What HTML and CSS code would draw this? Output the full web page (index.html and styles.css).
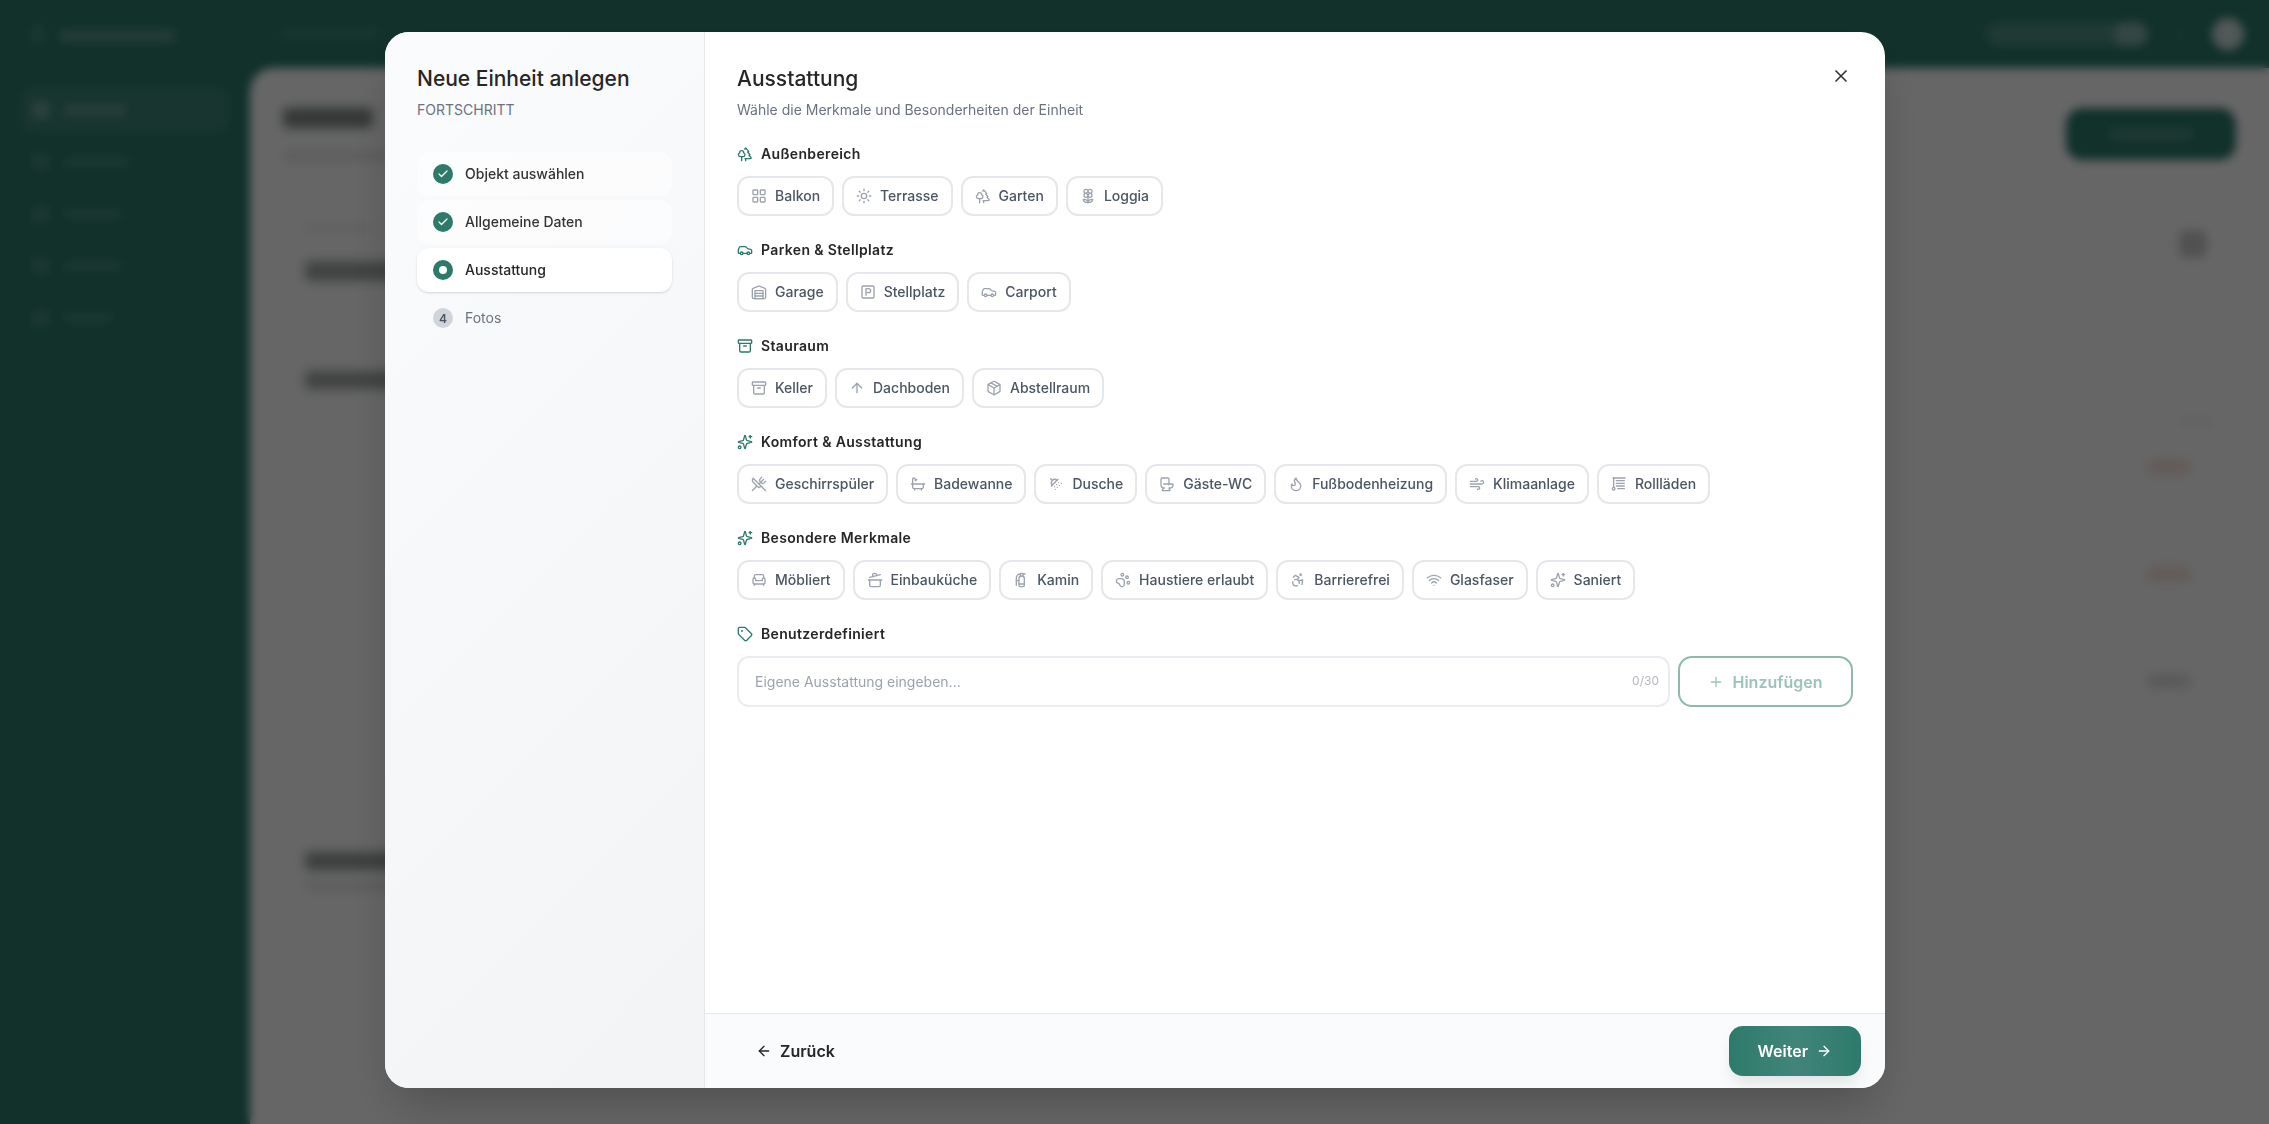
FILE: index.html
```html
<!DOCTYPE html>
<html lang="de">
<head>
<meta charset="utf-8">
<title>Neue Einheit anlegen</title>
<link rel="stylesheet" href="styles.css">
</head>
<body>
<svg class="defs" aria-hidden="true">
  <symbol id="i-trees" viewBox="0 0 24 24"><path d="M10 10v.2A3 3 0 0 1 8.9 16H5a3 3 0 0 1-1-5.8V10a3 3 0 0 1 6 0Z"/><path d="M7 16v6"/><path d="M13 19v3"/><path d="M12 19h8.3a1 1 0 0 0 .7-1.7L18 14h.3a1 1 0 0 0 .7-1.7L16 9h.2a1 1 0 0 0 .8-1.7L13 3l-1.4 1.5"/></symbol>
  <symbol id="i-grid" viewBox="0 0 24 24"><rect width="7" height="7" x="3" y="3" rx="1"/><rect width="7" height="7" x="14" y="3" rx="1"/><rect width="7" height="7" x="14" y="14" rx="1"/><rect width="7" height="7" x="3" y="14" rx="1"/></symbol>
  <symbol id="i-sun" viewBox="0 0 24 24"><circle cx="12" cy="12" r="4"/><path d="M12 2v2"/><path d="M12 20v2"/><path d="m4.93 4.93 1.41 1.41"/><path d="m17.66 17.66 1.41 1.41"/><path d="M2 12h2"/><path d="M20 12h2"/><path d="m6.34 17.66-1.41 1.41"/><path d="m19.07 4.93-1.41 1.41"/></symbol>
  <symbol id="i-flower" viewBox="0 0 24 24"><path d="M12 5a3 3 0 1 1 3 3m-3-3a3 3 0 1 0-3 3m3-3v1M9 8a3 3 0 1 0 3 3M9 8h1m5 0a3 3 0 1 1-3 3m3-3h-1m-2 3v-1"/><circle cx="12" cy="8" r="2"/><path d="M12 10v12"/><path d="M12 22c4.2 0 7-1.667 7-5-4.2 0-7 1.667-7 5Z"/><path d="M12 22c-4.2 0-7-1.667-7-5 4.2 0 7 1.667 7 5Z"/></symbol>
  <symbol id="i-car" viewBox="0 0 24 24"><path d="M19 17h2c.6 0 1-.4 1-1v-3c0-.9-.7-1.7-1.5-1.9C18.7 10.6 16 10 16 10s-1.3-1.4-2.2-2.3c-.5-.4-1.1-.7-1.8-.7H5c-.6 0-1.1.4-1.4.9l-1.4 2.9A3.7 3.7 0 0 0 2 12v4c0 .6.4 1 1 1h2"/><circle cx="7" cy="17" r="2"/><path d="M9 17h6"/><circle cx="17" cy="17" r="2"/></symbol>
  <symbol id="i-warehouse" viewBox="0 0 24 24"><path d="M22 8.35V20a2 2 0 0 1-2 2H4a2 2 0 0 1-2-2V8.35A2 2 0 0 1 3.26 6.5l8-3.2a2 2 0 0 1 1.48 0l8 3.2A2 2 0 0 1 22 8.35Z"/><path d="M6 18h12"/><path d="M6 14h12"/><rect width="12" height="12" x="6" y="10"/></symbol>
  <symbol id="i-parking" viewBox="0 0 24 24"><rect width="18" height="18" x="3" y="3" rx="2"/><path d="M9 17V7h4a3 3 0 0 1 0 6H9"/></symbol>
  <symbol id="i-archive" viewBox="0 0 24 24"><rect width="20" height="5" x="2" y="3" rx="1"/><path d="M4 8v11a2 2 0 0 0 2 2h12a2 2 0 0 0 2-2V8"/><path d="M10 12h4"/></symbol>
  <symbol id="i-up" viewBox="0 0 24 24"><path d="m5 12 7-7 7 7"/><path d="M12 19V5"/></symbol>
  <symbol id="i-package" viewBox="0 0 24 24"><path d="m7.5 4.27 9 5.15"/><path d="M21 8a2 2 0 0 0-1-1.73l-7-4a2 2 0 0 0-2 0l-7 4A2 2 0 0 0 3 8v8a2 2 0 0 0 1 1.73l7 4a2 2 0 0 0 2 0l7-4A2 2 0 0 0 21 16Z"/><path d="m3.3 7 8.7 5 8.7-5"/><path d="M12 22V12"/></symbol>
  <symbol id="i-sparkles" viewBox="0 0 24 24"><path d="M9.937 15.5A2 2 0 0 0 8.5 14.063l-6.135-1.582a.5.5 0 0 1 0-.962L8.5 9.936A2 2 0 0 0 9.937 8.5l1.582-6.135a.5.5 0 0 1 .963 0L14.063 8.5A2 2 0 0 0 15.5 9.937l6.135 1.581a.5.5 0 0 1 0 .964L15.5 14.063a2 2 0 0 0-1.437 1.437l-1.582 6.135a.5.5 0 0 1-.963 0z"/><path d="M20 2v4"/><path d="M22 4h-4"/><circle cx="4" cy="20" r="2"/></symbol>
  <symbol id="i-utensils" viewBox="0 0 24 24"><path d="m16 2-2.3 2.3a3 3 0 0 0 0 4.2l1.8 1.8a3 3 0 0 0 4.2 0L22 8"/><path d="M15 15 3.3 3.3a4.2 4.2 0 0 0 0 6l7.3 7.3c.7.7 2 .7 2.8 0L15 15Zm0 0 7 7"/><path d="m2.1 21.8 6.4-6.3"/><path d="m19 5-7 7"/></symbol>
  <symbol id="i-bath" viewBox="0 0 24 24"><path d="M9 6 6.5 3.5a1.5 1.5 0 0 0-1-.5C4.683 3 4 3.683 4 4.5V17a2 2 0 0 0 2 2h12a2 2 0 0 0 2-2v-5"/><path d="M10 5 8 7"/><path d="M2 12h20"/><path d="M7 19v2"/><path d="M17 19v2"/></symbol>
  <symbol id="i-shower" viewBox="0 0 24 24"><path d="m4 4 2.5 2.5"/><path d="M13.5 6.5a4.95 4.95 0 0 0-7 7"/><path d="M15 5 5 15"/><path d="M14 17v.01"/><path d="M10 16v.01"/><path d="M13 13v.01"/><path d="M16 10v.01"/><path d="M11 20v.01"/><path d="M17 14v.01"/><path d="M20 11v.01"/></symbol>
  <symbol id="i-toilet" viewBox="0 0 24 24"><path d="M7 12h13a1 1 0 0 1 1 1 5 5 0 0 1-5 5h-.598a.5.5 0 0 0-.424.765l1.544 2.47a.5.5 0 0 1-.424.765H5.402a.5.5 0 0 1-.424-.765L7 18"/><path d="M8 18a5 5 0 0 1-5-5V5a2 2 0 0 1 2-2h8a2 2 0 0 1 2 2v8"/></symbol>
  <symbol id="i-flame" viewBox="0 0 24 24"><path d="M8.5 14.5A2.5 2.5 0 0 0 11 12c0-1.38-.5-2-1-3-1.072-2.143-.224-4.054 2-6 .5 2.5 2 4.9 4 6.5 2 1.6 3 3.5 3 5.5a7 7 0 1 1-14 0c0-1.153.433-2.294 1-3a2.5 2.5 0 0 0 2.5 2.5z"/></symbol>
  <symbol id="i-wind" viewBox="0 0 24 24"><path d="M17.7 7.7a2.5 2.5 0 1 1 1.8 4.3H2"/><path d="M9.6 4.6A2 2 0 1 1 11 8H2"/><path d="M12.6 19.4A2 2 0 1 0 14 16H2"/></symbol>
  <symbol id="i-blinds" viewBox="0 0 24 24"><path d="M3 3h18"/><path d="M20 7H8"/><path d="M20 11H8"/><path d="M10 19h10"/><path d="M8 15h12"/><path d="M4 3v14"/><circle cx="4" cy="19" r="2"/></symbol>
  <symbol id="i-armchair" viewBox="0 0 24 24"><path d="M19 9V6a2 2 0 0 0-2-2H7a2 2 0 0 0-2 2v3"/><path d="M3 16a2 2 0 0 0 2 2h14a2 2 0 0 0 2-2v-5a2 2 0 0 0-4 0v2H7v-2a2 2 0 0 0-4 0Z"/><path d="M5 18v2"/><path d="M19 18v2"/></symbol>
  <symbol id="i-pot" viewBox="0 0 24 24"><path d="M2 12h20"/><path d="M20 12v8a2 2 0 0 1-2 2H6a2 2 0 0 1-2-2v-8"/><path d="m4 8 16-4"/><path d="m8.86 6.78-.45-1.81a2 2 0 0 1 1.45-2.43l1.94-.48a2 2 0 0 1 2.43 1.46l.45 1.8"/></symbol>
  <symbol id="i-extinguisher" viewBox="0 0 24 24"><path d="M15 6.5V3a1 1 0 0 0-1-1h-2a1 1 0 0 0-1 1v3.5"/><path d="M9 18h8"/><path d="M18 3h-3"/><path d="M11 3a6 6 0 0 0-6 6v11"/><path d="M5 13h4"/><path d="M17 10a4 4 0 0 0-8 0v10a2 2 0 0 0 2 2h4a2 2 0 0 0 2-2Z"/></symbol>
  <symbol id="i-paw" viewBox="0 0 24 24"><circle cx="11" cy="4" r="2"/><circle cx="18" cy="8" r="2"/><circle cx="20" cy="16" r="2"/><path d="M9 10a5 5 0 0 1 5 5v3.5a3.5 3.5 0 0 1-6.84 1.045Q6.52 17.48 4.46 16.84A3.5 3.5 0 0 1 5.5 10Z"/></symbol>
  <symbol id="i-access" viewBox="0 0 24 24"><circle cx="16" cy="4" r="1"/><path d="m18 19 1-7-6 1"/><path d="m5 8 3-3 5.5 3-2.36 3.5"/><path d="M4.24 14.5a5 5 0 0 0 6.88 6"/><path d="M13.76 17.5a5 5 0 0 0-6.88-6"/></symbol>
  <symbol id="i-wifi" viewBox="0 0 24 24"><path d="M12 20h.01"/><path d="M2 8.82a15 15 0 0 1 20 0"/><path d="M5 12.859a10 10 0 0 1 14 0"/><path d="M8.5 16.429a5 5 0 0 1 7 0"/></symbol>
  <symbol id="i-tag" viewBox="0 0 24 24"><path d="M12.586 2.586A2 2 0 0 0 11.172 2H4a2 2 0 0 0-2 2v7.172a2 2 0 0 0 .586 1.414l8.704 8.704a2.426 2.426 0 0 0 3.42 0l6.58-6.58a2.426 2.426 0 0 0 0-3.42z"/><circle cx="7.5" cy="7.5" r=".5"/></symbol>
  <symbol id="i-plus" viewBox="0 0 24 24"><path d="M5 12h14"/><path d="M12 5v14"/></symbol>
  <symbol id="i-x" viewBox="0 0 24 24"><path d="M18 6 6 18"/><path d="m6 6 12 12"/></symbol>
  <symbol id="i-left" viewBox="0 0 24 24"><path d="m12 19-7-7 7-7"/><path d="M19 12H5"/></symbol>
  <symbol id="i-right" viewBox="0 0 24 24"><path d="M5 12h14"/><path d="m12 5 7 7-7 7"/></symbol>
  <symbol id="i-check" viewBox="0 0 24 24"><path d="M20 6 9 17l-5-5"/></symbol>
</svg>

<div class="app" aria-hidden="true">
  <header class="topbar">
    <span class="logo-mark"></span><span class="logo"></span>
    <span class="search"></span>
    <span class="top-right"><span class="pill"><span class="pill-end"></span></span><span class="dot"></span><span class="avatar"></span></span>
  </header>
  <div class="shell">
    <nav class="nav">
      <span class="nav-item nav-active"><span class="nav-ic"></span><span class="nav-lb w1"></span></span>
      <span class="nav-item"><span class="nav-ic"></span><span class="nav-lb w2"></span></span>
      <span class="nav-item"><span class="nav-ic"></span><span class="nav-lb w3"></span></span>
      <span class="nav-item"><span class="nav-ic"></span><span class="nav-lb w3"></span></span>
      <span class="nav-item"><span class="nav-ic"></span><span class="nav-lb w4"></span></span>
    </nav>
    <main class="dash">
      <div class="dash-head">
        <div class="dash-titles"><span class="bar h-title"></span><span class="bar h-sub"></span></div>
        <span class="dash-btn"><span class="dash-btn-lb"></span></span>
      </div>
      <section class="card card-stat">
        <div class="stat-col"><span class="bar stat-lb"></span><span class="bar stat-num"></span></div>
        <span class="stat-ic"></span>
      </section>
      <section class="card card-list">
        <span class="bar list-title"></span>
        <span class="bar list-side"></span>
        <span class="badge badge-red"></span>
        <span class="badge badge-red"></span>
        <span class="badge badge-gray"></span>
      </section>
      <section class="card card-last">
        <span class="bar last-title"></span>
        <span class="bar last-sub"></span>
      </section>
    </main>
  </div>
</div>

<div class="overlay">
  <div class="modal">
    <aside class="side">
      <h2 class="side-title">Neue Einheit anlegen</h2>
      <p class="side-sub">FORTSCHRITT</p>
      <ol class="steps">
        <li class="step step-done"><span class="num"><svg class="ic-check"><use href="#i-check"/></svg></span>Objekt auswählen</li>
        <li class="step step-done"><span class="num"><svg class="ic-check"><use href="#i-check"/></svg></span>Allgemeine Daten</li>
        <li class="step step-now"><span class="num"><span class="num-dot"></span></span>Ausstattung</li>
        <li class="step step-todo"><span class="num">4</span>Fotos</li>
      </ol>
    </aside>
    <div class="pane">
      <button class="close" type="button" aria-label="Schließen"><svg class="ic-close"><use href="#i-x"/></svg></button>
      <div class="pane-body">
        <h2 class="pane-title">Ausstattung</h2>
        <p class="pane-sub">Wähle die Merkmale und Besonderheiten der Einheit</p>

        <section class="group">
          <h3 class="group-head"><svg class="ic-head"><use href="#i-trees"/></svg>Außenbereich</h3>
          <div class="chips">
            <button class="chip" type="button"><svg class="ic"><use href="#i-grid"/></svg>Balkon</button>
            <button class="chip" type="button"><svg class="ic"><use href="#i-sun"/></svg>Terrasse</button>
            <button class="chip" type="button"><svg class="ic"><use href="#i-trees"/></svg>Garten</button>
            <button class="chip" type="button"><svg class="ic"><use href="#i-flower"/></svg>Loggia</button>
          </div>
        </section>

        <section class="group">
          <h3 class="group-head"><svg class="ic-head"><use href="#i-car"/></svg>Parken &amp; Stellplatz</h3>
          <div class="chips">
            <button class="chip" type="button"><svg class="ic"><use href="#i-warehouse"/></svg>Garage</button>
            <button class="chip" type="button"><svg class="ic"><use href="#i-parking"/></svg>Stellplatz</button>
            <button class="chip" type="button"><svg class="ic"><use href="#i-car"/></svg>Carport</button>
          </div>
        </section>

        <section class="group">
          <h3 class="group-head"><svg class="ic-head"><use href="#i-archive"/></svg>Stauraum</h3>
          <div class="chips">
            <button class="chip" type="button"><svg class="ic"><use href="#i-archive"/></svg>Keller</button>
            <button class="chip" type="button"><svg class="ic"><use href="#i-up"/></svg>Dachboden</button>
            <button class="chip" type="button"><svg class="ic"><use href="#i-package"/></svg>Abstellraum</button>
          </div>
        </section>

        <section class="group">
          <h3 class="group-head"><svg class="ic-head"><use href="#i-sparkles"/></svg>Komfort &amp; Ausstattung</h3>
          <div class="chips">
            <button class="chip" type="button"><svg class="ic"><use href="#i-utensils"/></svg>Geschirrspüler</button>
            <button class="chip" type="button"><svg class="ic"><use href="#i-bath"/></svg>Badewanne</button>
            <button class="chip" type="button"><svg class="ic"><use href="#i-shower"/></svg>Dusche</button>
            <button class="chip" type="button"><svg class="ic"><use href="#i-toilet"/></svg>Gäste-WC</button>
            <button class="chip" type="button"><svg class="ic"><use href="#i-flame"/></svg>Fußbodenheizung</button>
            <button class="chip" type="button"><svg class="ic"><use href="#i-wind"/></svg>Klimaanlage</button>
            <button class="chip" type="button"><svg class="ic"><use href="#i-blinds"/></svg>Rollläden</button>
          </div>
        </section>

        <section class="group">
          <h3 class="group-head"><svg class="ic-head"><use href="#i-sparkles"/></svg>Besondere Merkmale</h3>
          <div class="chips">
            <button class="chip" type="button"><svg class="ic"><use href="#i-armchair"/></svg>Möbliert</button>
            <button class="chip" type="button"><svg class="ic"><use href="#i-pot"/></svg>Einbauküche</button>
            <button class="chip" type="button"><svg class="ic"><use href="#i-extinguisher"/></svg>Kamin</button>
            <button class="chip" type="button"><svg class="ic"><use href="#i-paw"/></svg>Haustiere erlaubt</button>
            <button class="chip" type="button"><svg class="ic"><use href="#i-access"/></svg>Barrierefrei</button>
            <button class="chip" type="button"><svg class="ic"><use href="#i-wifi"/></svg>Glasfaser</button>
            <button class="chip" type="button"><svg class="ic"><use href="#i-sparkles"/></svg>Saniert</button>
          </div>
        </section>

        <section class="group">
          <h3 class="group-head"><svg class="ic-head"><use href="#i-tag"/></svg>Benutzerdefiniert</h3>
          <div class="custom">
            <div class="field">
              <input class="input" type="text" placeholder="Eigene Ausstattung eingeben...">
              <span class="count">0/30</span>
            </div>
            <button class="add" type="button"><svg class="ic-add"><use href="#i-plus"/></svg>Hinzufügen</button>
          </div>
        </section>
      </div>
      <footer class="foot">
        <button class="back" type="button"><svg class="ic"><use href="#i-left"/></svg>Zurück</button>
        <button class="next" type="button">Weiter<svg class="ic"><use href="#i-right"/></svg></button>
      </footer>
    </div>
  </div>
</div>
</body>
</html>
```

FILE: styles.css
```css
* { box-sizing: border-box; }
html, body { margin: 0; height: 100%; overflow: hidden; }
body { font-family: "Inter", "Liberation Sans", sans-serif; background: #2d7a6b; }
.defs { display: none; }
svg { fill: none; stroke: currentColor; stroke-width: 2; stroke-linecap: round; stroke-linejoin: round; flex: none; }
button { font-family: inherit; cursor: pointer; }

/* background application, seen blurred through the overlay */
.app { height: 1124px; display: flex; flex-direction: column; background: #2d7a6b; }
.topbar { height: 68px; flex: none; display: flex; align-items: center; padding: 0 25px 0 30px; }
.logo-mark { width: 16px; height: 20px; background: rgba(255,255,255,.1); border-radius: 5px; }
.logo { width: 118px; height: 14px; margin: 4px 0 0 12px; background: rgba(255,255,255,.2); border-radius: 6px; }
.search { width: 100px; height: 14px; margin-left: 104px; background: rgba(255,255,255,.08); border-radius: 6px; }
.top-right { margin-left: auto; display: flex; align-items: center; gap: 28px; }
.pill { width: 162px; height: 24px; display: flex; justify-content: flex-end; background: rgba(255,255,255,.17); border-radius: 12px; }
.pill-end { width: 34px; height: 24px; background: rgba(255,255,255,.3); border-radius: 12px; }
.dot { width: 8px; height: 8px; background: rgba(255,255,255,.12); border-radius: 50%; }
.avatar { width: 32px; height: 32px; background: #fff; opacity: .75; border-radius: 50%; }
.shell { flex: 1; display: flex; min-height: 0; }
.nav { width: 250px; flex: none; display: flex; flex-direction: column; gap: 4px; padding: 18px 20px; }
.nav-item { height: 48px; display: flex; align-items: center; gap: 14px; padding: 0 12px; border-radius: 12px; }
.nav-active { background: rgba(255,255,255,.08); }
.nav-ic { width: 18px; height: 18px; background: rgba(255,255,255,.13); border-radius: 6px; }
.nav-active .nav-ic { background: rgba(255,255,255,.25); }
.nav-lb { height: 10px; background: rgba(255,255,255,.12); border-radius: 4px; }
.nav-active .nav-lb { background: rgba(255,255,255,.22); }
.w1 { width: 62px; } .w2 { width: 66px; } .w3 { width: 58px; } .w4 { width: 48px; }
.dash { flex: 1; display: flex; flex-direction: column; background: #fff; border-radius: 24px 0 0 0; padding: 32px 33px 0; }
.dash-head { display: flex; justify-content: space-between; align-items: flex-start; height: 94px; padding-top: 8px; }
.dash-titles { display: flex; flex-direction: column; gap: 20px; }
.bar { display: block; background: #2b3a36; border-radius: 4px; filter: blur(3px); }
.h-title { width: 90px; height: 20px; opacity: .6; }
.h-sub { width: 115px; height: 8px; opacity: .14; margin-top: 4px; }
.dash-btn { width: 170px; height: 52px; display: flex; align-items: center; justify-content: center; background: #2d7a6b; border-radius: 16px; }
.dash-btn-lb { width: 84px; height: 12px; background: rgba(255,255,255,.16); border-radius: 4px; }
.card { background: #fff; position: relative; }
.card-stat { height: 134px; display: flex; justify-content: space-between; padding: 36px 29px 36px 22px; box-shadow: 0 0 6px rgba(0,0,0,.04); margin: 0 0 16px; }
.stat-col { display: flex; flex-direction: column; gap: 29px; margin-top: -6px; }
.stat-lb { width: 70px; height: 8px; opacity: .08; }
.stat-num { width: 120px; height: 20px; opacity: .45; }
.stat-ic { width: 28px; height: 28px; background: #111; opacity: .22; border-radius: 8px; }
.card-list { height: 465px; box-shadow: 0 0 6px rgba(0,0,0,.04); padding: 27px 22px; display: flex; flex-direction: column; align-items: flex-start; }
.list-title { width: 100px; height: 18px; opacity: .45; }
.list-side { width: 34px; height: 6px; opacity: .08; align-self: flex-end; margin-top: 30px; }
.badge { width: 44px; height: 12px; border-radius: 8px; align-self: flex-end; margin-right: 23px; filter: blur(3px); }
.badge-red { background: #d98a6a; opacity: .3; }
.badge-gray { background: #888; opacity: .3; }
.card-list .list-side + .badge { margin-top: 36px; }
.card-list .badge-red + .badge-red { margin-top: 95px; }
.card-list .badge-gray { margin-top: 95px; }
.card-last { flex: 1; margin-top: 16px; padding: 27px 22px; box-shadow: 0 0 6px rgba(0,0,0,.04); display: flex; flex-direction: column; gap: 12px; }
.last-title { width: 100px; height: 18px; opacity: .5; }
.last-sub { width: 130px; height: 8px; opacity: .14; }

/* overlay + modal */
.overlay { position: fixed; inset: 0; background: rgba(0,0,0,.6); backdrop-filter: blur(5px); padding: 32px 384px 36px 385px; }
.modal { width: 1500px; height: 1056px; display: flex; border-radius: 24px; overflow: hidden; background: #fff; box-shadow: 0 25px 50px -12px rgba(0,0,0,.25); }
.side { width: 320px; flex: none; padding: 32px; background: linear-gradient(135deg, #fafbfd, #f3f4f6); border-right: 1px solid #e5e7eb; }
.side-title, .pane-title { margin: 0; font-size: 21px; line-height: 29px; font-weight: 500; color: #262626; }
.side-sub, .pane-sub { margin: 7px 0 0; font-size: 14px; line-height: 20px; color: #6b7280; }
.steps { list-style: none; margin: 32px 0 0; padding: 0; display: flex; flex-direction: column; gap: 4px; width: 255px; }
.step { height: 44px; display: flex; align-items: center; gap: 12px; padding: 0 16px 1px; border-radius: 12px; font-size: 14px; font-weight: 500; color: #333; }
.step-done { background: rgba(255,255,255,.5); }
.step-now { background: #fff; box-shadow: 0 1px 3px rgba(0,0,0,.1), 0 1px 2px rgba(0,0,0,.06); color: #262626; }
.step-todo { color: #6b7280; font-weight: 400; }
.num { width: 20px; height: 20px; flex: none; display: flex; align-items: center; justify-content: center; border-radius: 50%; background: #2d7a6b; color: #fff; margin-top: 1px; }
.step-todo .num { background: #d1d5db; color: #4b5563; font-size: 12px; font-weight: 600; }
.num-dot { width: 8px; height: 8px; background: #fff; border-radius: 50%; }
.ic-check { width: 12px; height: 12px; stroke-width: 2.5; }

.pane { flex: 1; min-width: 0; display: flex; flex-direction: column; position: relative; }
.close { position: absolute; top: 32px; right: 32px; width: 24px; height: 24px; padding: 0; border: 0; background: none; color: #333; display: flex; align-items: center; justify-content: center; }
.ic-close { width: 20px; height: 20px; }
.pane-body { flex: 1; padding: 32px 32px 0; }
.group { margin-top: 24px; }
.group-head { margin: 0 0 12px; height: 20px; display: flex; align-items: center; gap: 8px; font-size: 14px; line-height: 20px; font-weight: 600; letter-spacing: .35px; color: #262626; }
.ic-head { width: 16px; height: 16px; color: #2d7a6b; }
.chips { display: flex; gap: 8px; }
.chip { height: 40px; display: flex; align-items: center; gap: 8px; padding: 0 12px 1px; background: #fff; border: 2px solid #e5e7eb; border-radius: 12px; font-size: 14px; font-weight: 500; color: #4b5563; white-space: nowrap; }
.ic { width: 16px; height: 16px; }
.chip .ic { color: #9ca3af; }
.custom { display: flex; gap: 8px; }
.field { flex: 1; position: relative; }
.input { width: 100%; height: 51px; padding: 0 60px 0 16px; border: 2px solid #ebecf1; border-radius: 12px; font: 400 14px "Inter", sans-serif; color: #333; outline: 0; background: #fff; }
.input::placeholder { color: #9ca3af; opacity: 1; }
.count { position: absolute; right: 11px; top: 17px; font-size: 12px; line-height: 16px; color: #b5b8bf; }
.add { width: 175px; height: 51px; display: flex; align-items: center; justify-content: center; gap: 8px; background: #fff; border: 2px solid #90b9ae; border-radius: 14px; color: #9cc3ba; font-size: 16px; font-weight: 600; }
.ic-add { width: 16px; height: 16px; }
.foot { height: 75px; flex: none; display: flex; align-items: center; justify-content: space-between; padding: 0 24px; background: #fafbfd; border-top: 1px solid #e5e7eb; }
.back { height: 48px; display: flex; align-items: center; gap: 8px; padding: 0 26px 0 27px; border: 0; background: none; color: #262626; font-size: 16px; font-weight: 600; }
.next { height: 50px; display: flex; align-items: center; gap: 8px; padding: 0 29px; border: 0; border-radius: 14px; color: #fff; font-size: 16px; font-weight: 600; background: linear-gradient(90deg, #2d7a6b, #41857a 50%, #2d7a6b); box-shadow: 0 10px 15px -3px rgba(0,0,0,.1); }
```
